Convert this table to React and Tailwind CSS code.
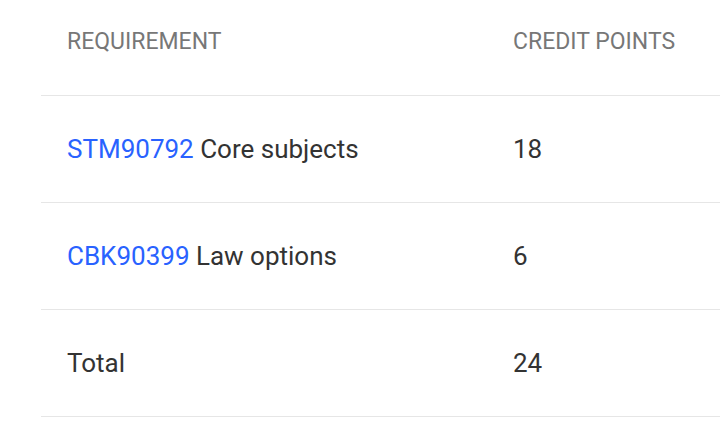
import React from 'react';

const rows = [
  { code: 'STM90792', name: 'Core subjects', points: 18 },
  { code: 'CBK90399', name: 'Law options', points: 6 },
];

const App = () => {
  return (
    <div className="w-[720px] h-[422px] bg-white overflow-hidden font-['Roboto',sans-serif]">
      <div className="ml-[41px] w-[700px]">
        {/* Header */}
        <div className="grid grid-cols-[472px_1fr] h-[96px] border-b border-[#e6e6e6] text-[23px] text-[#777] leading-none pt-[30px]">
          <div className="pl-[26px]">REQUIREMENT</div>
          <div>CREDIT POINTS</div>
        </div>

        {/* Rows */}
        {rows.map((row) => (
          <div
            key={row.code}
            className="grid grid-cols-[472px_1fr] items-center h-[107px] border-b border-[#e6e6e6] text-[26px] text-[#333]"
          >
            <div className="pl-[26px]">
              <a href="#" className="text-[#2962ff]">{row.code}</a> {row.name}
            </div>
            <div>{row.points}</div>
          </div>
        ))}

        <div className="grid grid-cols-[472px_1fr] items-center h-[107px] border-b border-[#e6e6e6] text-[26px] text-[#333]">
          <div className="pl-[26px]">Total</div>
          <div>24</div>
        </div>
      </div>
    </div>
  );
};

export default App;
